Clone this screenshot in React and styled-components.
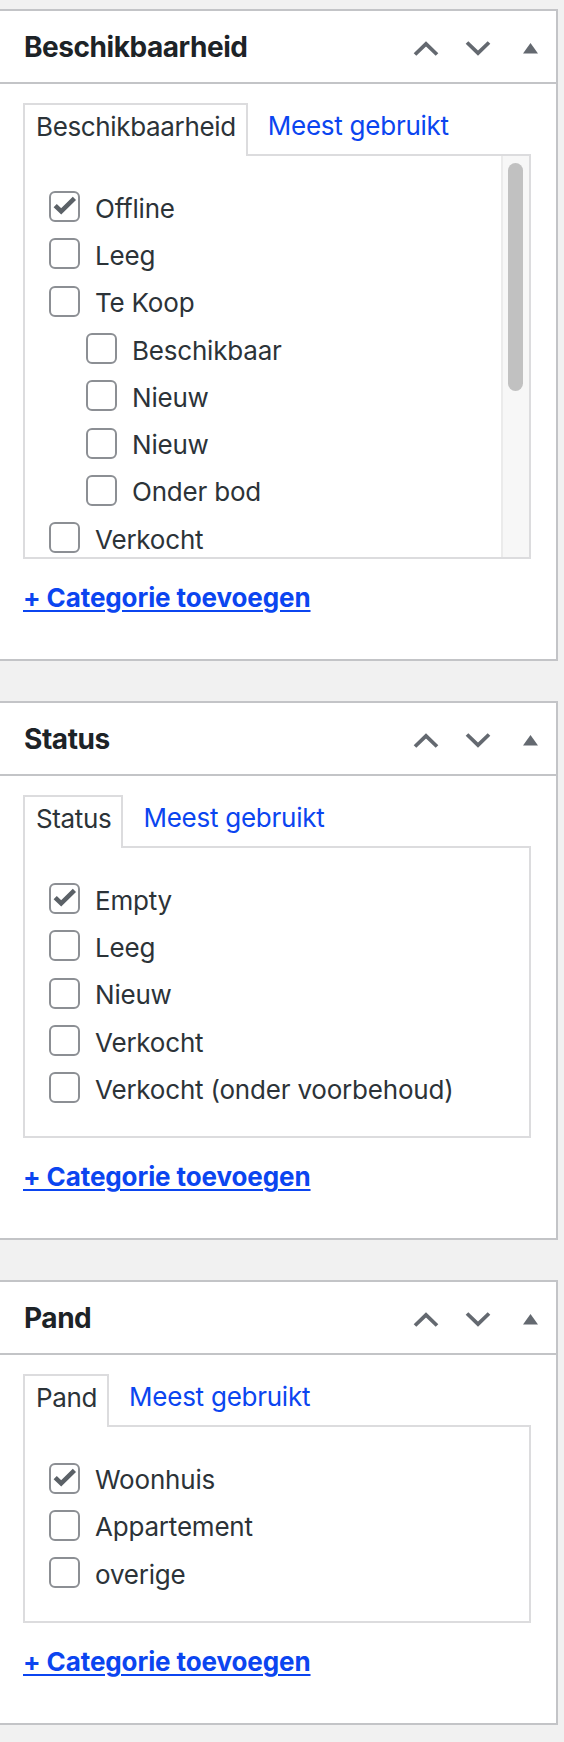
import React from "react";
import styled, { createGlobalStyle } from "styled-components";

const GlobalStyle = createGlobalStyle`
  html, body {
    margin: 0;
    padding: 0;
    background: #f1f1f1;
  }
  body {
    font-family: Inter, "Noto Sans", "Liberation Sans", sans-serif;
    -webkit-font-smoothing: antialiased;
  }
  *, *::before, *::after { box-sizing: border-box; }
`;

const Page = styled.main`
  width: 564px;
  min-height: 1742px;
  padding: 9px 0 16px;
  display: flex;
  flex-direction: column;
  gap: 40px;
  overflow: hidden;
`;

const Panel = styled.section`
  width: 560px;
  margin-left: -2px;
  background: #fff;
  border: 2px solid #c3c4c7;
`;

const Header = styled.header`
  display: flex;
  align-items: center;
  height: 73px;
  padding-left: 24px;
  border-bottom: 2px solid #c3c4c7;
`;

const Title = styled.h2`
  flex: 1;
  margin: 0;
  font-size: 28px;
  font-weight: 700;
  line-height: 28px;
  letter-spacing: -0.45px;
  color: #1d2327;
`;

const Actions = styled.div`
  display: flex;
  align-self: stretch;
`;

const IconButton = styled.button`
  width: 52px;
  padding: 3px 0 0;
  border: 0;
  background: transparent;
  display: flex;
  align-items: center;
  justify-content: center;
  color: #646970;
  cursor: pointer;
`;

const Body = styled.div`
  padding: 19px 25px 45px 23px;
`;

const Tabs = styled.ul`
  display: flex;
  align-items: flex-start;
  margin: 0;
  padding: 0;
  list-style: none;
`;

const ActiveTab = styled.li`
  position: relative;
  z-index: 1;
  height: 53px;
  margin-bottom: -2px;
  padding: 6px 10px 0 11px;
  background: #fff;
  border: 2px solid #dcdcde;
  border-bottom: 0;
  font-size: 26px;
  line-height: 32px;
  letter-spacing: -0.35px;
  color: #2c3338;
`;

const TabLink = styled.li`
  padding: 7px 0 0 20px;
  font-size: 26px;
  line-height: 32px;
  letter-spacing: -0.25px;
  color: #0b45f0;
`;

const ListBox = styled.div`
  display: flex;
  height: ${(p) => (p.$height ? `${p.$height}px` : "auto")};
  background: #fff;
  border: 2px solid #dcdcde;
`;

const Checklist = styled.ul`
  flex: 1;
  margin: 0;
  padding: 27px 0 25px 24px;
  list-style: none;
  overflow: hidden;
`;

const SubList = styled.ul`
  margin: 0 0 0 37px;
  padding: 0;
  list-style: none;
`;

const Row = styled.li`
  display: flex;
  align-items: center;
  height: 47.3px;
`;

const Box = styled.span`
  flex: none;
  width: 31px;
  height: 31px;
  border: 2px solid #8c8f94;
  border-radius: 6px;
  background: #fff;
  display: block;

  svg {
    display: block;
  }
`;

const Label = styled.span`
  margin: 4px 0 0 15px;
  font-size: 26px;
  line-height: 32px;
  letter-spacing: -0.2px;
  color: #2c3338;
  white-space: nowrap;
`;

const Track = styled.div`
  flex: none;
  width: 28px;
  padding: 7px 6px 0 5px;
  background: #f7f7f7;
  border-left: 2px solid #ebebeb;
`;

const Thumb = styled.div`
  width: 15px;
  height: 228px;
  border-radius: 8px;
  background: #c1c1c1;
`;

const AddLink = styled.a`
  display: inline-block;
  margin-top: 23px;
  font-size: 26px;
  font-weight: 700;
  line-height: 32px;
  letter-spacing: -0.1px;
  color: #0b45f0;
  text-decoration: underline;
  text-decoration-thickness: 2px;
  text-underline-offset: 3px;
`;

const ChevronUp = () => (
  <svg width="26" height="15" viewBox="0 0 26 15" fill="none">
    <path d="M2 13.5 L13 3 L24 13.5" stroke="currentColor" strokeWidth="3.8" strokeLinejoin="miter" />
  </svg>
);

const ChevronDown = () => (
  <svg width="26" height="15" viewBox="0 0 26 15" fill="none">
    <path d="M2 1.5 L13 12 L24 1.5" stroke="currentColor" strokeWidth="3.8" strokeLinejoin="miter" />
  </svg>
);

const Triangle = () => (
  <svg width="15" height="11" viewBox="0 0 15 11">
    <path d="M0 10.5 L7.5 0 L15 10.5 Z" fill="currentColor" />
  </svg>
);

const Check = () => (
  <svg width="27" height="27" viewBox="0 0 27 27" fill="none">
    <path d="M4.2 12.6 L10.2 18.4 L23.4 5.4" stroke="#5b6167" strokeWidth="4.6" strokeLinejoin="miter" />
  </svg>
);

const Item = ({ label, checked }) => (
  <Row>
    <Box>{checked && <Check />}</Box>
    <Label>{label}</Label>
  </Row>
);

const MetaBox = ({ title, tab, listHeight, scroll, children }) => (
  <Panel>
    <Header>
      <Title>{title}</Title>
      <Actions>
        <IconButton aria-label="Omhoog verplaatsen">
          <ChevronUp />
        </IconButton>
        <IconButton aria-label="Omlaag verplaatsen">
          <ChevronDown />
        </IconButton>
        <IconButton aria-label="Paneel inklappen">
          <Triangle />
        </IconButton>
      </Actions>
    </Header>
    <Body>
      <Tabs>
        <ActiveTab>{tab}</ActiveTab>
        <TabLink>Meest gebruikt</TabLink>
      </Tabs>
      <ListBox $height={listHeight}>
        <Checklist>{children}</Checklist>
        {scroll && (
          <Track>
            <Thumb />
          </Track>
        )}
      </ListBox>
      <AddLink href="#">+ Categorie toevoegen</AddLink>
    </Body>
  </Panel>
);

export default function App() {
  return (
    <>
      <GlobalStyle />
      <Page>
        <MetaBox title="Beschikbaarheid" tab="Beschikbaarheid" listHeight={405} scroll>
          <Item label="Offline" checked />
          <Item label="Leeg" />
          <Item label="Te Koop" />
          <li>
            <SubList>
              <Item label="Beschikbaar" />
              <Item label="Nieuw" />
              <Item label="Nieuw" />
              <Item label="Onder bod" />
            </SubList>
          </li>
          <Item label="Verkocht" />
        </MetaBox>
        <MetaBox title="Status" tab="Status">
          <Item label="Empty" checked />
          <Item label="Leeg" />
          <Item label="Nieuw" />
          <Item label="Verkocht" />
          <Item label="Verkocht (onder voorbehoud)" />
        </MetaBox>
        <MetaBox title="Pand" tab="Pand">
          <Item label="Woonhuis" checked />
          <Item label="Appartement" />
          <Item label="overige" />
        </MetaBox>
      </Page>
    </>
  );
}
